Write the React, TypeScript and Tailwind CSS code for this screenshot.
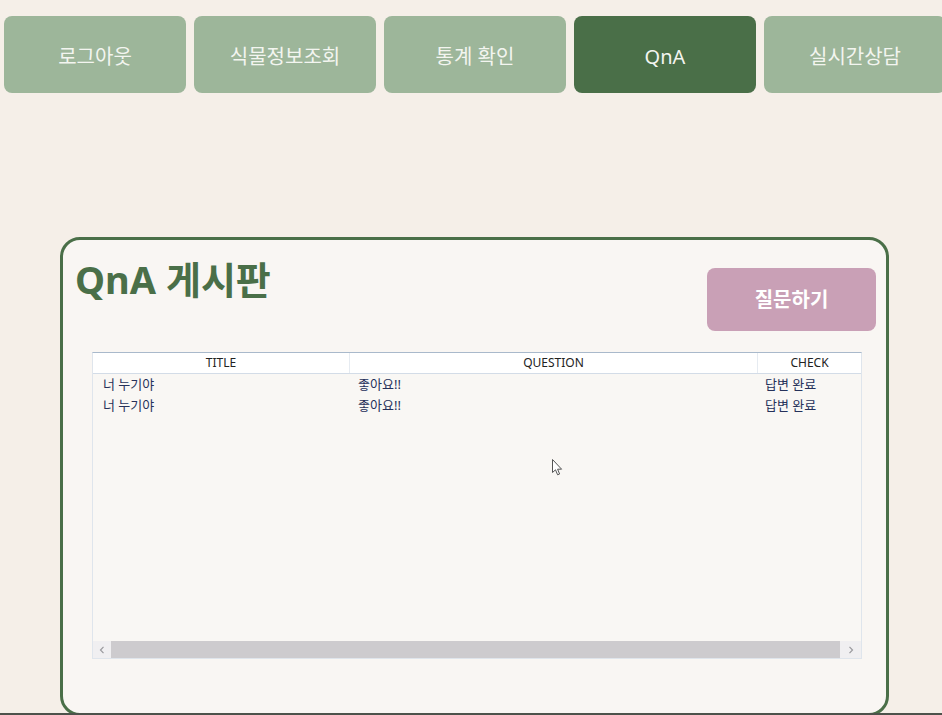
import React from 'react';

const font = { fontFamily: '"Noto Sans", "Noto Sans CJK KR", sans-serif' };

const tabs = ['로그아웃', '식물정보조회', '통계 확인', 'QnA', '실시간상담'];

const rows = [
  { title: '너 누기야', question: '좋아요!!', check: '답변 완료' },
  { title: '너 누기야', question: '좋아요!!', check: '답변 완료' },
];

const App: React.FC = () => {
  return (
    <div
      className="relative h-[715px] w-full overflow-hidden bg-[#f5efe8] border-b-2 border-[#4d524b]"
      style={font}
    >
      <nav className="flex gap-2 pl-1 pt-4">
        {tabs.map((tab) => (
          <button
            key={tab}
            className={`h-[77px] w-[182px] shrink-0 rounded-lg pt-1 text-[20px] text-[#f3f5f0] ${
              tab === 'QnA' ? 'bg-[#4a6f48]' : 'bg-[#9db69a]'
            }`}
          >
            {tab}
          </button>
        ))}
      </nav>

      <section className="ml-[60px] mt-[144px] h-[479px] w-[829px] rounded-[20px] border-[3px] border-[#4a6f48] bg-[#f9f6f3] pl-3 pr-[10px] pt-[14px]">
        <div className="flex items-start justify-between">
          <h1 className="text-[38px] font-bold leading-[50px] text-[#4a6f48]">QnA 게시판</h1>
          <button className="mt-[14px] h-[63px] w-[169px] rounded-lg bg-[#c9a0b6] text-[20px] font-bold text-white">
            질문하기
          </button>
        </div>

        <div className="ml-[17px] mr-[14px] mt-[21px] flex h-[307px] flex-col border border-[#dfe5ec] border-t-[#a9b9cb] bg-[#f9f7f4] text-[12px]">
          <div className="flex h-[21px] shrink-0 items-center border-b border-[#d3dce7] bg-white text-[#222]">
            <div className="w-[257px] shrink-0 border-r border-[#e6ebf1] text-center leading-[20px]">TITLE</div>
            <div className="w-[408px] shrink-0 border-r border-[#e6ebf1] text-center leading-[20px]">QUESTION</div>
            <div className="flex-1 text-center leading-[20px]">CHECK</div>
          </div>
          <div className="flex-1 text-[13px] text-[#26315a]">
            {rows.map((r, i) => (
              <div key={i} className="flex h-[21px] items-center">
                <div className="w-[257px] shrink-0 pl-[10px]">{r.title}</div>
                <div className="w-[408px] shrink-0 pl-[8px]">{r.question}</div>
                <div className="flex-1 pl-[7px]">{r.check}</div>
              </div>
            ))}
          </div>
          <div className="flex h-[17px] shrink-0 items-stretch bg-[#f0eff1]">
            <div className="flex w-[18px] items-center justify-center text-[#9a9a9e]">
              <svg width="6" height="8" viewBox="0 0 6 8"><path d="M4.5 0.8 L1.5 4 L4.5 7.2" fill="none" stroke="currentColor" strokeWidth="1.2" /></svg>
            </div>
            <div className="flex-1 bg-[#cdcbce]" />
            <div className="flex w-[21px] items-center justify-center text-[#9a9a9e]">
              <svg width="6" height="8" viewBox="0 0 6 8"><path d="M1.5 0.8 L4.5 4 L1.5 7.2" fill="none" stroke="currentColor" strokeWidth="1.2" /></svg>
            </div>
          </div>
        </div>
      </section>

      <svg className="absolute left-[552px] top-[459px]" width="12" height="18" viewBox="0 0 12 18">
        <path d="M0.5 0.5 L0.5 13.5 L3.5 10.8 L5.6 15.8 L7.6 15 L5.6 10.2 L9.6 10.2 Z" fill="#fff" stroke="#555" strokeWidth="1" strokeLinejoin="round" />
      </svg>
    </div>
  );
};

export default App;
